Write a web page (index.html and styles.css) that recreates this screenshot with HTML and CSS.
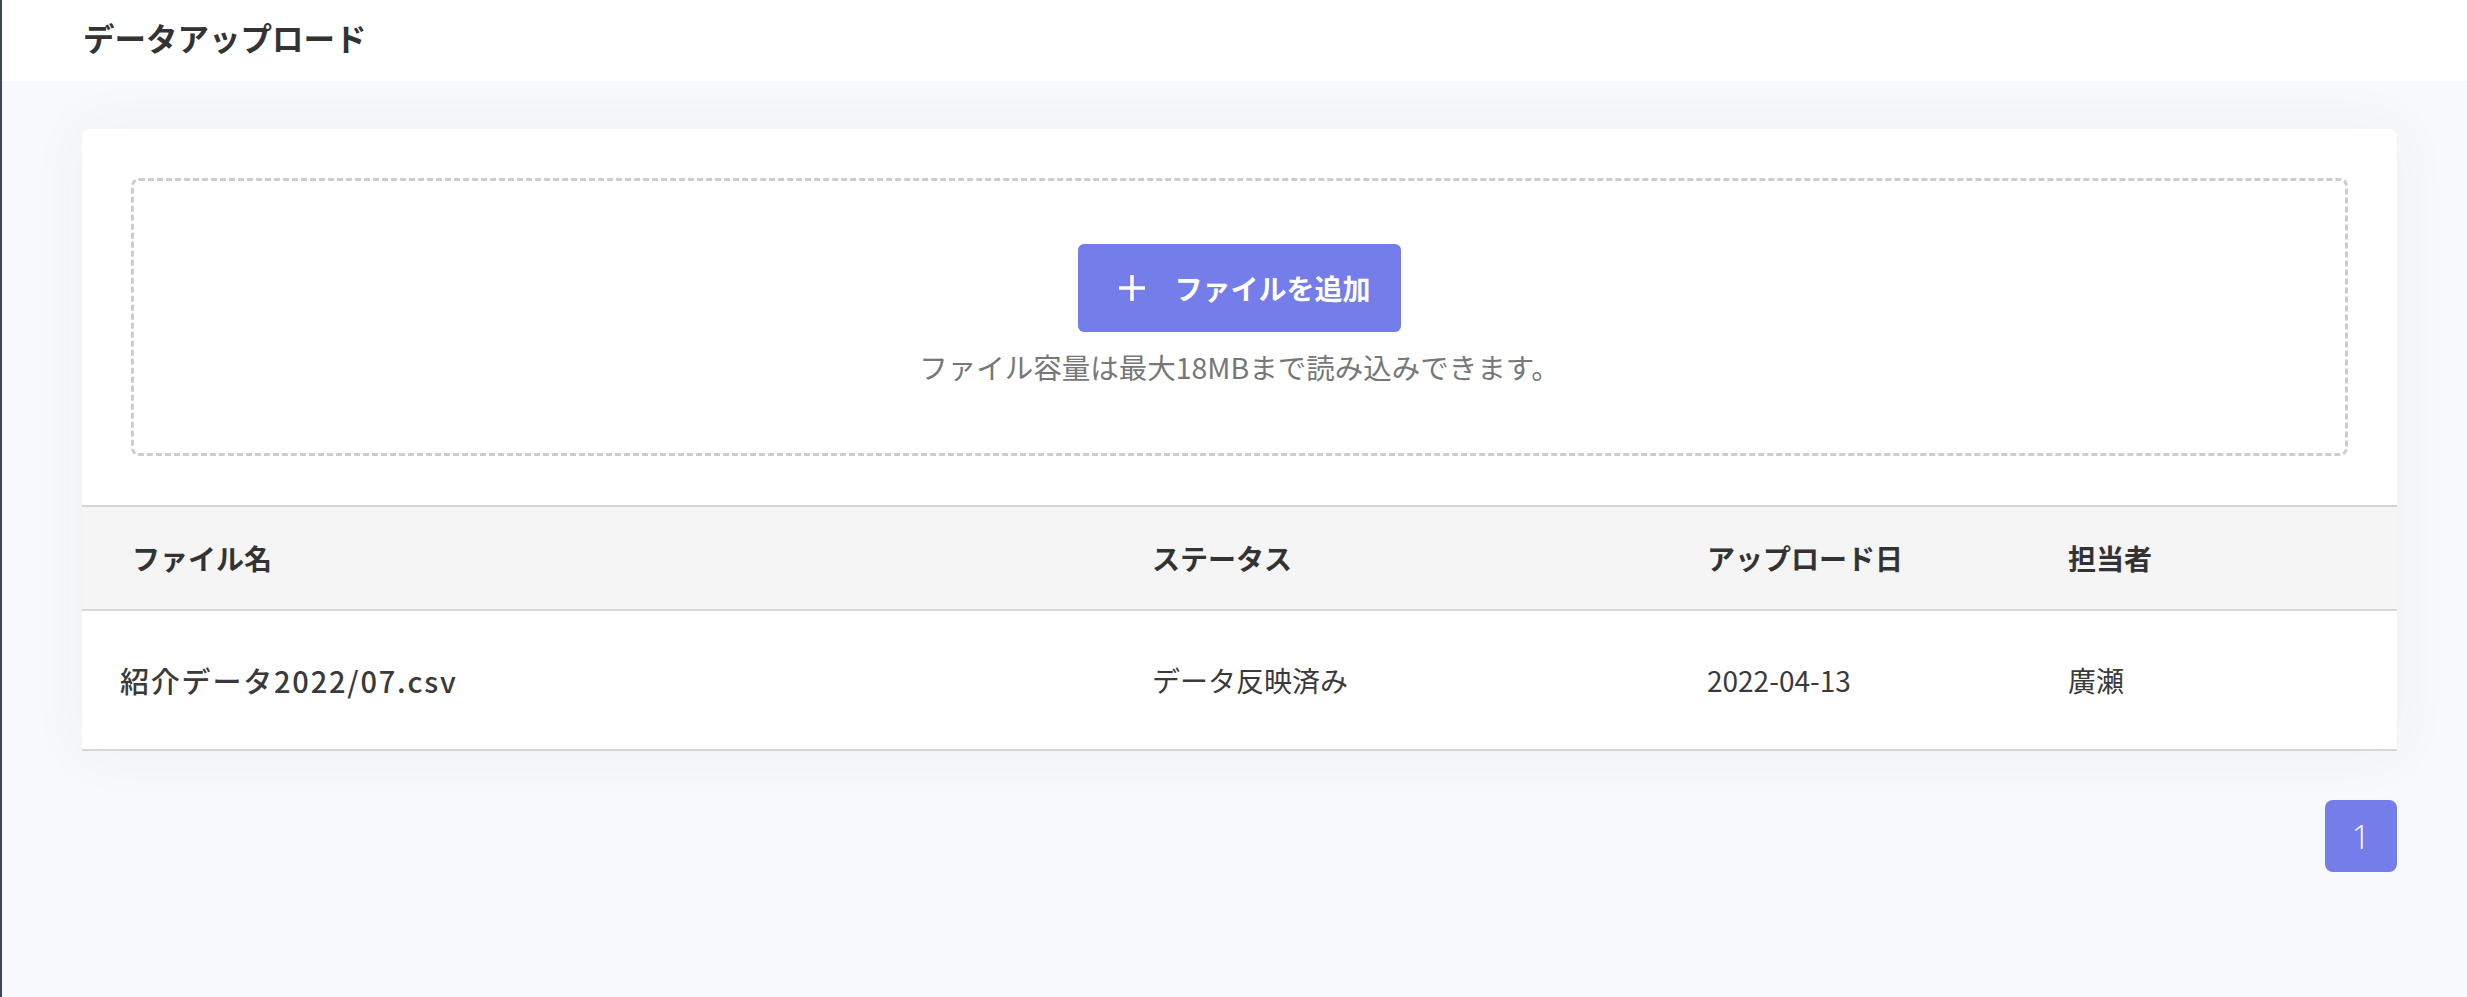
FILE: index.html
```html
<!DOCTYPE html>
<html lang="ja">
<head>
<meta charset="utf-8">
<title>データアップロード</title>
<link rel="stylesheet" href="styles.css">
</head>
<body>
<div class="app">
  <header class="topbar">
    <h1 class="page-title">データアップロード</h1>
  </header>
  <main class="main">
    <section class="card">
      <div class="upload-area">
        <button class="add-btn" type="button">
          <svg class="plus" viewBox="0 0 28 28" width="28" height="28" aria-hidden="true">
            <path d="M14 1V27M1 14H27" stroke="#fff" stroke-width="3.5" fill="none"/>
          </svg>
          <span class="btn-label">ファイルを追加</span>
        </button>
        <p class="hint">ファイル容量は最大18MBまで読み込みできます。</p>
      </div>
      <div class="table">
        <div class="row head">
          <div class="cell first">ファイル名</div>
          <div class="cell">ステータス</div>
          <div class="cell">アップロード日</div>
          <div class="cell">担当者</div>
        </div>
        <div class="row body">
          <div class="cell first filename">紹介データ2022/07.csv</div>
          <div class="cell">データ反映済み</div>
          <div class="cell">2022-04-13</div>
          <div class="cell">廣瀬</div>
        </div>
      </div>
    </section>
    <nav class="pager">
      <span class="page current">1</span>
    </nav>
  </main>
</div>
</body>
</html>
```

FILE: styles.css
```css
* { box-sizing: border-box; }
html, body { margin: 0; padding: 0; }
body {
  background: #f8f9fc;
  font-family: "Noto Sans CJK JP", "Noto Sans", sans-serif;
  color: #333;
}
.app {
  min-height: 997px;
  border-left: 2px solid #3f4754;
}
.topbar {
  height: 81px;
  background: #fff;
  display: flex;
  align-items: center;
  padding: 0 0 6px 81px;
}
.page-title {
  margin: 0;
  font-size: 31.5px;
  font-weight: 700;
  color: #333;
  line-height: 1;
}
.main {
  padding: 48px 70px 0 80px;
}
.card {
  background: #fff;
  border-radius: 8px 8px 0 0;
  box-shadow: 0 0 60px rgba(40, 50, 100, 0.05);
  padding-top: 49px;
}
.upload-area {
  margin: 0 49px 49px;
  height: 278px;
  border: 3px dashed #cdcdcd;
  border-radius: 8px;
  display: flex;
  flex-direction: column;
  align-items: center;
  padding-top: 63px;
}
.add-btn {
  height: 88px;
  display: flex;
  align-items: center;
  gap: 28px;
  padding: 0 30px 0 40px;
  border: none;
  border-radius: 6px;
  background: #747dea;
  color: #fff;
  font-family: inherit;
  font-size: 28px;
  font-weight: 700;
  white-space: nowrap;
}
.plus { flex: none; }
.btn-label { line-height: 1; }
.hint {
  margin: 16px 0 0;
  font-size: 28.5px;
  line-height: 37px;
  color: #777;
}
.table {
  border-top: 2px solid #d4d4d4;
}
.row {
  display: grid;
  grid-template-columns: 1020px 555px 361px 1fr;
  align-items: center;
  border-bottom: 2px solid #d6d6d6;
}
.row.head {
  height: 104px;
  background: #f5f5f5;
  font-size: 28px;
  font-weight: 700;
  color: #333;
}
.row.body {
  height: 140px;
  font-size: 28px;
  color: #3a3a3a;
}
.cell {
  padding-left: 50px;
}
.row.body .cell.first {
  padding-left: 38px;
}
.filename {
  font-weight: 500;
  font-size: 29px;
  letter-spacing: 1.8px;
}
.pager {
  display: flex;
  justify-content: flex-end;
  margin-top: 49px;
}
.page {
  width: 72px;
  height: 72px;
  border-radius: 8px;
  background: #747dea;
  color: #fff;
  display: flex;
  align-items: center;
  justify-content: center;
  font-family: "Open Sans", "Noto Sans", sans-serif;
  font-weight: 300;
  font-size: 33px;
}
```
